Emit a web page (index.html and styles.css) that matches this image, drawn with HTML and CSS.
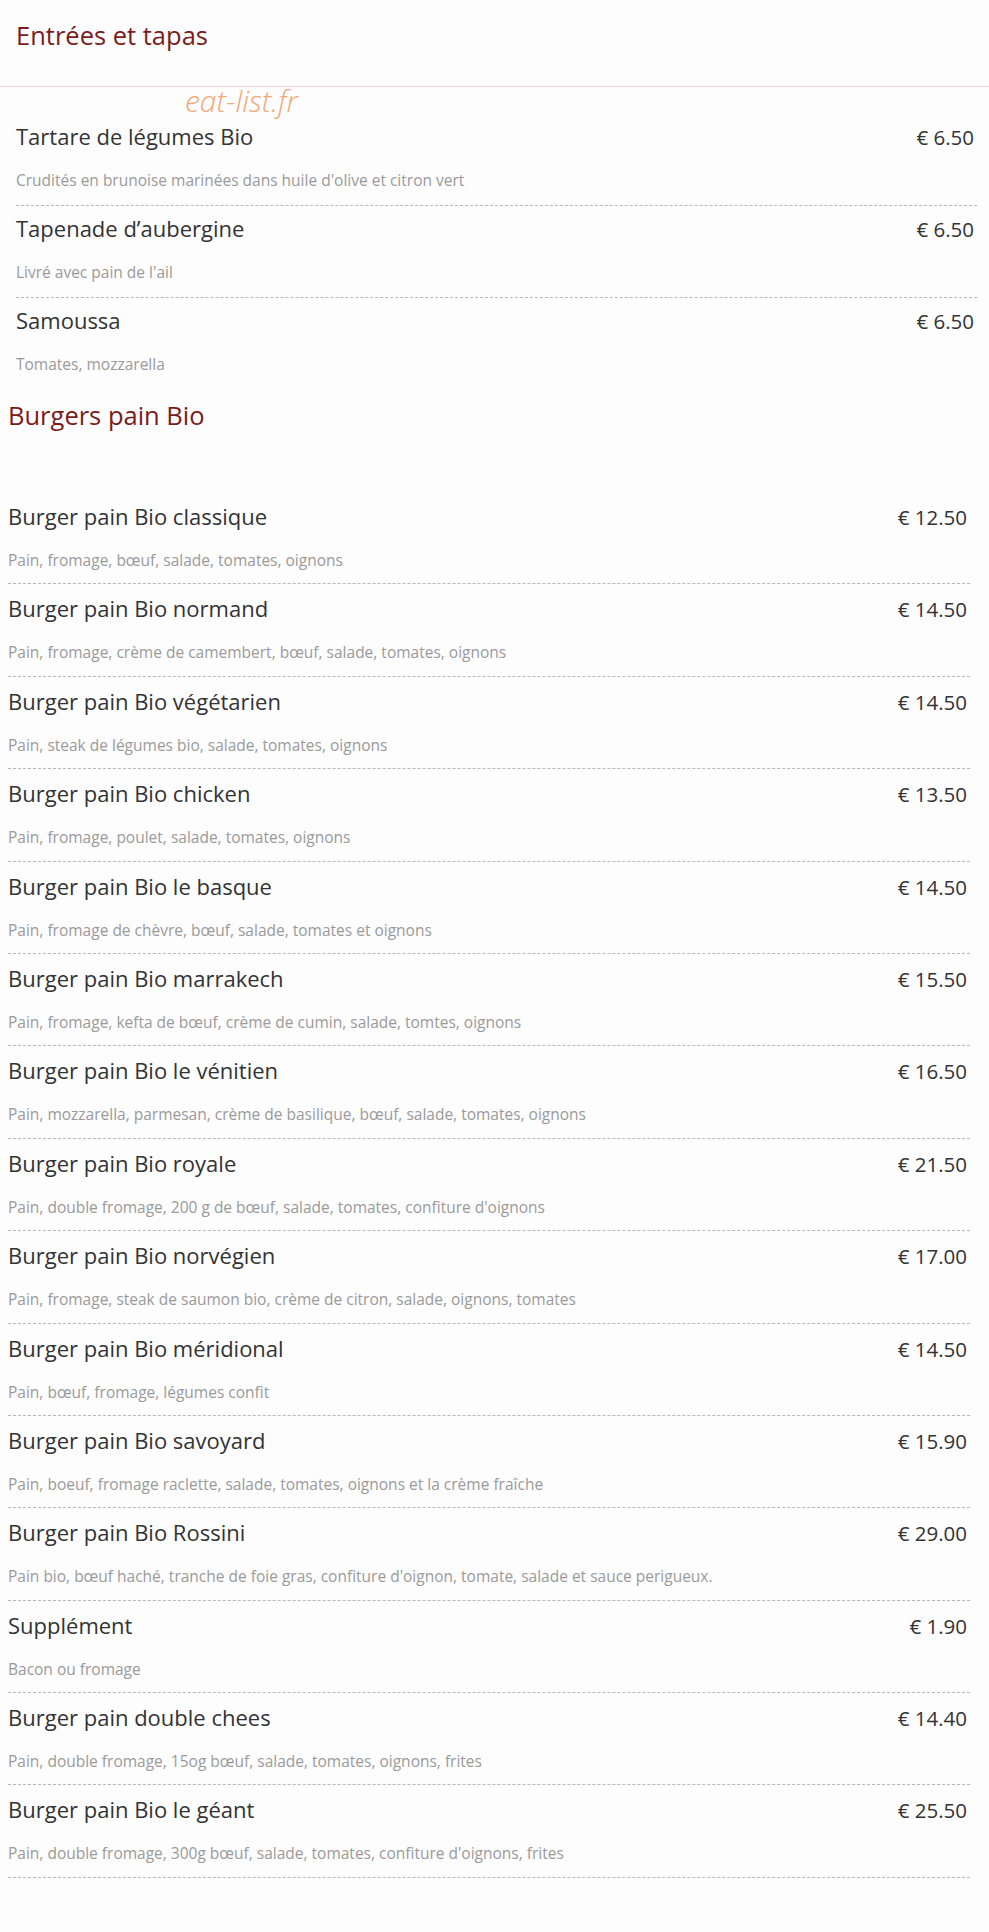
FILE: index.html
```html
<!DOCTYPE html>
<html lang="fr">
<head>
    <meta charset="UTF-8">
    <title>Menu</title>
    <link rel="stylesheet" href="styles.css">
</head>
<body>
    <div class="watermark">eat-list.fr</div>

    <section class="menu-section entrees">
        <div class="section-head">
            <h2>Entrées et tapas</h2>
        </div>
        <div class="items">
            <div class="item">
                <div class="item-row"><span class="name">Tartare de légumes Bio</span><span class="price">€ 6.50</span></div>
                <div class="desc">Crudités en brunoise marinées dans huile d'olive et citron vert</div>
            </div>
            <div class="item">
                <div class="item-row"><span class="name">Tapenade d’aubergine</span><span class="price">€ 6.50</span></div>
                <div class="desc">Livré avec pain de l'ail</div>
            </div>
            <div class="item">
                <div class="item-row"><span class="name">Samoussa</span><span class="price">€ 6.50</span></div>
                <div class="desc">Tomates, mozzarella</div>
            </div>
        </div>
    </section>

    <section class="menu-section burgers">
        <div class="section-head">
            <h2>Burgers pain Bio</h2>
        </div>
        <div class="items">
            <div class="item">
                <div class="item-row"><span class="name">Burger pain Bio classique</span><span class="price">€ 12.50</span></div>
                <div class="desc">Pain, fromage, bœuf, salade, tomates, oignons</div>
            </div>
            <div class="item">
                <div class="item-row"><span class="name">Burger pain Bio normand</span><span class="price">€ 14.50</span></div>
                <div class="desc">Pain, fromage, crème de camembert, bœuf, salade, tomates, oignons</div>
            </div>
            <div class="item">
                <div class="item-row"><span class="name">Burger pain Bio végétarien</span><span class="price">€ 14.50</span></div>
                <div class="desc">Pain, steak de légumes bio, salade, tomates, oignons</div>
            </div>
            <div class="item">
                <div class="item-row"><span class="name">Burger pain Bio chicken</span><span class="price">€ 13.50</span></div>
                <div class="desc">Pain, fromage, poulet, salade, tomates, oignons</div>
            </div>
            <div class="item">
                <div class="item-row"><span class="name">Burger pain Bio le basque</span><span class="price">€ 14.50</span></div>
                <div class="desc">Pain, fromage de chèvre, bœuf, salade, tomates et oignons</div>
            </div>
            <div class="item">
                <div class="item-row"><span class="name">Burger pain Bio marrakech</span><span class="price">€ 15.50</span></div>
                <div class="desc">Pain, fromage, kefta de bœuf, crème de cumin, salade, tomtes, oignons</div>
            </div>
            <div class="item">
                <div class="item-row"><span class="name">Burger pain Bio le vénitien</span><span class="price">€ 16.50</span></div>
                <div class="desc">Pain, mozzarella, parmesan, crème de basilique, bœuf, salade, tomates, oignons</div>
            </div>
            <div class="item">
                <div class="item-row"><span class="name">Burger pain Bio royale</span><span class="price">€ 21.50</span></div>
                <div class="desc">Pain, double fromage, 200 g de bœuf, salade, tomates, confiture d'oignons</div>
            </div>
            <div class="item">
                <div class="item-row"><span class="name">Burger pain Bio norvégien</span><span class="price">€ 17.00</span></div>
                <div class="desc">Pain, fromage, steak de saumon bio, crème de citron, salade, oignons, tomates</div>
            </div>
            <div class="item">
                <div class="item-row"><span class="name">Burger pain Bio méridional</span><span class="price">€ 14.50</span></div>
                <div class="desc">Pain, bœuf, fromage, légumes confit</div>
            </div>
            <div class="item">
                <div class="item-row"><span class="name">Burger pain Bio savoyard</span><span class="price">€ 15.90</span></div>
                <div class="desc">Pain, boeuf, fromage raclette, salade, tomates, oignons et la crème fraîche</div>
            </div>
            <div class="item">
                <div class="item-row"><span class="name">Burger pain Bio Rossini</span><span class="price">€ 29.00</span></div>
                <div class="desc">Pain bio, bœuf haché, tranche de foie gras, confiture d'oignon, tomate, salade et sauce perigueux.</div>
            </div>
            <div class="item">
                <div class="item-row"><span class="name">Supplément</span><span class="price">€ 1.90</span></div>
                <div class="desc">Bacon ou fromage</div>
            </div>
            <div class="item">
                <div class="item-row"><span class="name">Burger pain double chees</span><span class="price">€ 14.40</span></div>
                <div class="desc">Pain, double fromage, 15og bœuf, salade, tomates, oignons, frites</div>
            </div>
            <div class="item">
                <div class="item-row"><span class="name">Burger pain Bio le géant</span><span class="price">€ 25.50</span></div>
                <div class="desc">Pain, double fromage, 300g bœuf, salade, tomates, confiture d'oignons, frites</div>
            </div>
        </div>
    </section>
</body>
</html>
```

FILE: styles.css
```css
html {
    background: #fdfdfd;
}
body {
    margin: 0;
    min-height: 1932px;
    font-family: "Open Sans", Arial, sans-serif;
    color: #333;
    position: relative;
}
.watermark {
    position: absolute;
    left: 185px;
    top: 86px;
    font-size: 30px;
    line-height: 30px;
    font-style: italic;
    font-weight: 300;
    color: #f0a878;
}
h2 {
    margin: 0;
    font-size: 25.5px;
    line-height: 30px;
    font-weight: 400;
    color: #7a1c1c;
}
/* entrées : titre avec filet rose sur toute la largeur */
.entrees .section-head {
    padding: 20px 16px 36px;
    border-bottom: 1px solid #ead2d2;
}
.entrees .items {
    padding: 27px 12px 0 16px;
}
.entrees .item {
    padding-top: 7px;
    padding-bottom: 15px;
}
.entrees .item:last-child {
    border-bottom: 0;
}
.burgers .section-head {
    padding: 11px 8px 0;
}
.burgers .items {
    padding: 62px 19px 0 8px;
}
.item {
    padding: 9px 0 13.4px;
    border-bottom: 1px dashed #b8b8b8;
}
.item-row {
    display: flex;
    justify-content: space-between;
    align-items: baseline;
    height: 30px;
    line-height: 30px;
}
.name {
    font-size: 22px;
}
.price {
    font-size: 20.5px;
    padding-right: 3px;
}
.desc {
    margin-top: 19px;
    font-size: 15.5px;
    line-height: 20px;
    color: #9a9a9a;
}
```
